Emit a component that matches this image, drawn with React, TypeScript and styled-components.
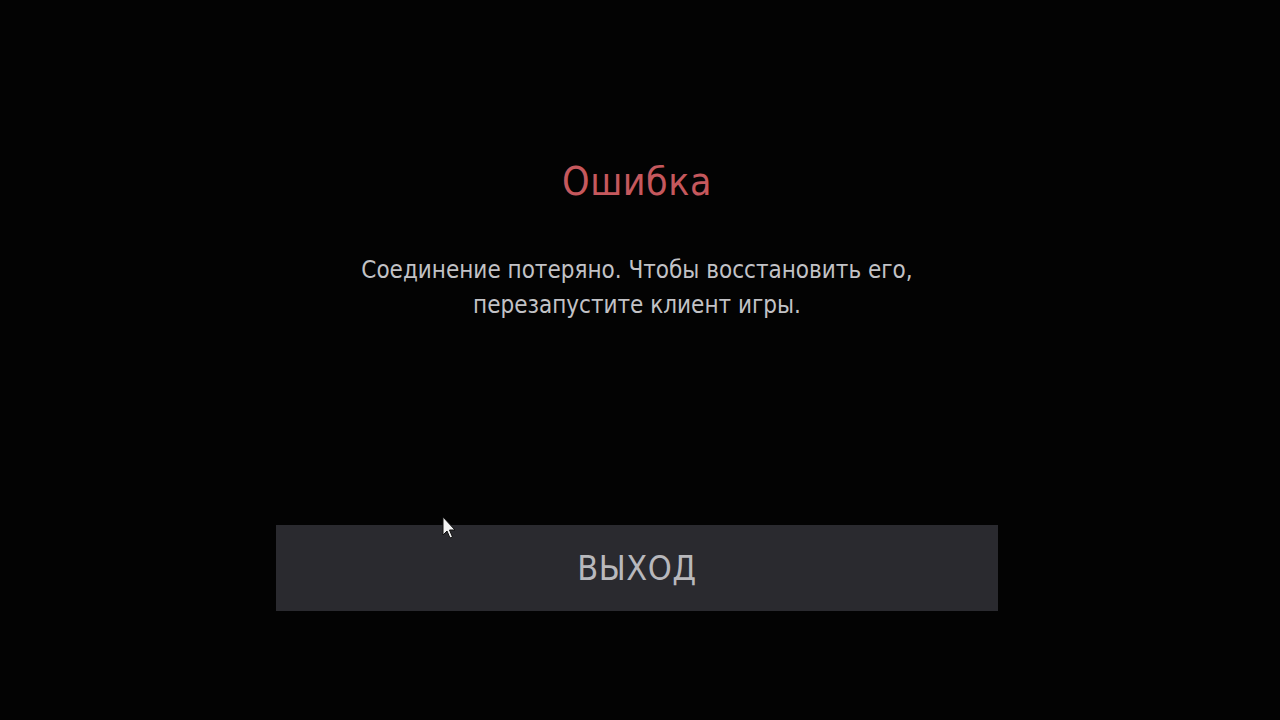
import React from 'react'
import styled, { createGlobalStyle } from 'styled-components'

const GlobalStyle = createGlobalStyle`
  html, body {
    margin: 0;
    padding: 0;
    background: #030303;
  }
`

const Screen = styled.div`
  position: relative;
  box-sizing: border-box;
  width: 1280px;
  height: 720px;
  padding-right: 6px;
  background: #030303;
  display: flex;
  flex-direction: column;
  align-items: center;
  font-family: 'DejaVu Sans Condensed', 'Liberation Sans Narrow', sans-serif;
  overflow: hidden;
`

const Title = styled.h1`
  margin: 158px 0 0;
  font-size: 39px;
  font-weight: 400;
  line-height: 48px;
  color: #c5585d;
  letter-spacing: 0.5px;
`

const Message = styled.p`
  margin: 47px 0 0;
  font-size: 24px;
  line-height: 35px;
  color: #c2c2c6;
  text-align: center;
`

const ExitButton = styled.button`
  margin-top: 202px;
  width: 722px;
  height: 86px;
  border: none;
  background: #2a2a2f;
  color: #b8b8bc;
  font-family: inherit;
  font-size: 34px;
  letter-spacing: 0.5px;
  cursor: pointer;
`

const Pointer = styled.svg`
  position: absolute;
  left: 442px;
  top: 516px;
`

function App() {
  return (
    <>
      <GlobalStyle />
      <Screen>
        <Title>Ошибка</Title>
        <Message>
          Соединение потеряно. Чтобы восстановить его,
          <br />
          перезапустите клиент игры.
        </Message>
        <ExitButton>ВЫХОД</ExitButton>
        <Pointer width="16" height="26" viewBox="0 0 16 26">
          <path d="M1 1 L1 19 L5 15 L8 22 L10.5 21 L7.5 14 L13 14 Z" fill="#f2f2f2" stroke="#111" strokeWidth="1" />
        </Pointer>
      </Screen>
    </>
  )
}

export default App
